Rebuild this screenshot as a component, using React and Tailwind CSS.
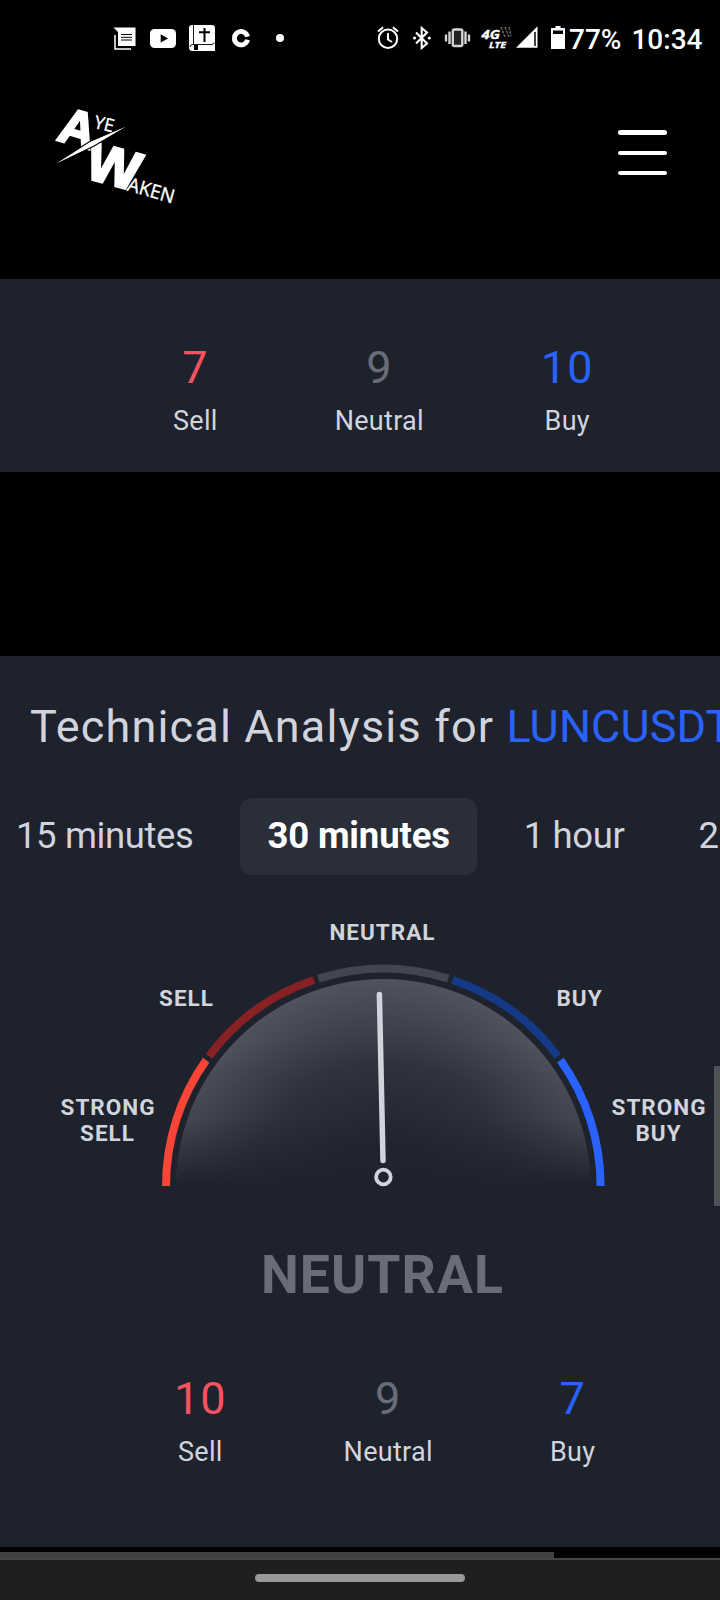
import { useState } from "react";

const tabs = ["15 minutes", "30 minutes", "1 hour", "2 hours"];

function StatusBar() {
  return (
    <div className="h-[76px] flex items-center text-white shrink-0">
      <svg width="550" height="76" viewBox="0 0 550 76" className="shrink-0">
        {/* news */}
        <path d="M113.500 27.500h22v18.500h-17.500v-14z" fill="white" />
        <path d="M115 35v14h16" fill="none" stroke="white" strokeWidth="1.500" />
        <path d="M121 34.500h11M121 37.300h11M121 40h11" stroke="black" strokeWidth="1" />
        {/* video */}
        <rect x="150" y="29" width="26" height="19" rx="4.500" fill="white" />
        <path d="M160.700 34.200v8.400l7.300-4.200z" fill="black" />
        {/* bible */}
        <path d="M192 25h20q3 0 3 3v23h-22.500q-3.500 0-3.500-3.500v-19.500q0-3 3-3z" fill="white" />
        <path d="M193.500 25v19M190 47q0-2.500 3-2.500h19q2 0 2-2" fill="none" stroke="black" strokeWidth="0.900" />
        <path d="M204.500 28v14M199 32.200h11" stroke="black" strokeWidth="2" />
        <path d="M194 45h4v5h-4z" fill="black" />
        {/* coin */}
        <path d="M247.600 36.600a6.700 6.700 0 1 0 0 3.200" fill="none" stroke="white" strokeWidth="4.800" />
        <circle cx="280" cy="38" r="4" fill="white" />
        {/* alarm */}
        <g fill="none" stroke="white" strokeWidth="2">
          <circle cx="388" cy="38.800" r="9.200" />
          <path d="M388 33v6.500l4 2.500M378 31.500l5-4.300M398 31.500l-5-4.300" />
        </g>
        {/* bluetooth */}
        <path d="M416 32.500l11 11-5.300 4.500V28l5.300 4.500-11 11" fill="none" stroke="white" strokeWidth="2.100" />
        <circle cx="414.500" cy="38" r="1.600" fill="white" />
        <circle cx="429.300" cy="38" r="1.600" fill="white" />
        {/* vibrate */}
        <g fill="none" stroke="#d4d4d4" strokeWidth="2.400">
          <rect x="452.800" y="29.500" width="9.500" height="16.500" rx="1.500" fill="#222" />
          <path d="M449.500 31.500v12.500M446 34.500v7M465.500 31.500v12.500M469 34.500v7" />
        </g>
        {/* network */}
        <g fill="white" stroke="white" strokeWidth="0.300" fontWeight="700" fontStyle="italic" fontFamily="'Open Sans', sans-serif">
          <text x="481.500" y="39.300" fontSize="12.500" textLength="18.500" lengthAdjust="spacingAndGlyphs">4G</text>
          <text x="489" y="48" fontSize="9" textLength="17" lengthAdjust="spacingAndGlyphs">LTE</text>
        </g>
        <path d="M501 27l4 10M505 27l4 10M509 27l2 9" stroke="#666" strokeWidth="1.500" strokeDasharray="3 1" />
        {/* signal */}
        <path d="M516 47.800l21.500-21.500v21.500z" fill="white" />
        <path d="M535 32v14" stroke="black" strokeWidth="1.500" />
      </svg>
      <svg width="17" height="76" viewBox="550 0 17 76" className="shrink-0">
        <path d="M555.500 26h5v2h4.500v21h-14v-21h4.500z" fill="white" />
        <path d="M553 30.500h10v3.500h-10z" fill="black" />
      </svg>
      <span className="mt-[3px] ml-[2px] text-[28px] font-medium leading-none">77%</span>
      <span className="mt-[3px] ml-[10px] text-[28px] font-medium leading-none">10:34</span>
    </div>
  );
}

function Logo() {
  return (
    <svg width="150" height="120" viewBox="0 0 450 360" fill="white">
      <g fontFamily="'Liberation Sans', Arial, sans-serif" fontWeight="700" stroke="white" strokeWidth="7">
        <text transform="translate(47 134) rotate(16)" fontSize="150">A</text>
        <text transform="translate(128 247) rotate(15) scale(1.06 1)" fontSize="162">W</text>
      </g>
      {/* slash with a dark edge that cuts into both letters */}
      <path d="M48 206L150 141L257 95L160 152z" stroke="black" strokeWidth="7" />
      <path d="M48 206L150 141L257 95L160 152z" />
      <g fontFamily="'Open Sans', sans-serif" stroke="white" strokeWidth="1">
        <text transform="translate(159 98) rotate(14)" fontSize="54" textLength="60" lengthAdjust="spacingAndGlyphs">YE</text>
        <text transform="translate(259 286) rotate(16)" fontSize="58" textLength="144" lengthAdjust="spacingAndGlyphs">AKEN</text>
      </g>
    </svg>
  );
}

function Header() {
  return (
    <header className="h-[203px] flex items-start justify-between pl-10 pr-[53px] shrink-0">
      <div className="mt-[19px]">
        <Logo />
      </div>
      <button className="mt-[54px] w-[49px] flex flex-col">
        <span className="h-[5px] rounded-sm bg-white" />
        <span className="mt-[16px] h-[4px] rounded-sm bg-white" />
        <span className="mt-[16px] h-[4px] rounded-sm bg-white" />
      </button>
    </header>
  );
}

function Counter({ value, label, color }) {
  return (
    <div className="flex flex-col items-center">
      <span className={`text-[45px] leading-[54px] tracking-[1px] ${color}`}>{value}</span>
      <span className="text-[27px] leading-[36px] mt-[8px] tracking-[0.300px]">{label}</span>
    </div>
  );
}

function Counters({ sell, neutral, buy }) {
  return (
    <div className="flex gap-[117px]">
      <Counter value={sell} label="Sell" color="text-[#f7525f]" />
      <Counter value={neutral} label="Neutral" color="text-[#6a6d78]" />
      <Counter value={buy} label="Buy" color="text-[#2962ff]" />
    </div>
  );
}

// arcs are 36deg each, from left to right
const segments = [
  { from: 180, to: 144.600, color: "#f94438" },
  { from: 143.400, to: 108.600, color: "#872124" },
  { from: 107.400, to: 72.600, color: "#434651" },
  { from: 71.400, to: 36.600, color: "#143a87" },
  { from: 35.400, to: 0, color: "#2962ff" },
];

function point(angle) {
  const a = (angle * Math.PI) / 180;
  return `${383.3 + 217.3 * Math.cos(a)} ${286 - 217.3 * Math.sin(a)}`;
}

function Gauge() {
  return (
    <svg width="720" height="310" viewBox="0 0 720 310" className="block">
      <defs>
        <radialGradient id="dial" gradientUnits="userSpaceOnUse" cx="383.300" cy="286" r="207">
          <stop offset="0.200" stopColor="#232733" />
          <stop offset="0.600" stopColor="#32353f" />
          <stop offset="1" stopColor="#50535e" />
        </radialGradient>
        <linearGradient id="fade" x1="0" y1="0" x2="0" y2="1">
          <stop offset="0.300" stopColor="#1e222d" stopOpacity="0" />
          <stop offset="0.680" stopColor="#1e222d" stopOpacity="0.250" />
          <stop offset="1" stopColor="#1e222d" />
        </linearGradient>
      </defs>
      <path d="M176.300 286a207 207 0 0 1 414 0z" fill="url(#dial)" />
      <path d="M176 286a207.300 207.300 0 0 1 414.600 0z" fill="url(#fade)" />
      {segments.map((s) => (
        <path
          key={s.color}
          d={`M${point(s.from)}A217.3 217.3 0 0 1 ${point(s.to)}`}
          fill="none"
          stroke={s.color}
          strokeWidth="8"
        />
      ))}
      <path d="M379.400 94.500L383 260.500" stroke="#d1d4dc" strokeWidth="5.500" strokeLinecap="round" />
      <circle cx="383.400" cy="277" r="7.300" fill="none" stroke="#d1d4dc" strokeWidth="3.800" />
      <g fill="#d1d4dc" fontSize="22.500" fontWeight="700" textAnchor="middle" letterSpacing="1">
        <text x="382.500" y="40">NEUTRAL</text>
        <text x="186.500" y="106">SELL</text>
        <text x="579.500" y="106">BUY</text>
        <text x="108" y="215">STRONG</text>
        <text x="107.500" y="241">SELL</text>
        <text x="659" y="215">STRONG</text>
        <text x="658.500" y="241">BUY</text>
      </g>
    </svg>
  );
}

function App() {
  const [active, setActive] = useState("30 minutes");

  return (
    <div className="relative w-[720px] h-[1600px] overflow-hidden bg-black text-[#d1d4dc] flex flex-col font-[Roboto,sans-serif]">
      <StatusBar />
      <Header />

      <section className="h-[193px] shrink-0 bg-[#1e222d] pt-[62px] pl-[173px]">
        <Counters sell={7} neutral={9} buy={10} />
      </section>

      <section className="mt-[184px] h-[891px] shrink-0 bg-[#1e222d] overflow-hidden flex flex-col">
        <h1 className="mt-[44px] ml-[30px] text-[45px] leading-[54px] whitespace-nowrap tracking-[1.150px]">
          Technical Analysis for{" "}
          <span className="text-[#2962ff] tracking-[0.100px]">LUNCUSDT</span>
        </h1>

        <div className="mt-[44px] -ml-[11px] flex gap-5 shrink-0">
          {tabs.map((tab) => (
            <button
              key={tab}
              onClick={() => setActive(tab)}
              className={`h-[77px] px-[27px] rounded-xl text-[36.500px] whitespace-nowrap shrink-0 ${
                active === tab
                  ? "bg-[#2a2e39] text-white font-bold tracking-[-0.150px]"
                  : "tracking-[-0.400px]"
              }`}
            >
              {tab}
            </button>
          ))}
        </div>

        <div className="mt-[25px] shrink-0">
          <Gauge />
        </div>

        <p className="mt-[33px] ml-[45px] text-center text-[53.500px] leading-[64px] font-bold tracking-[1.100px] text-[#6a6d78]">
          NEUTRAL
        </p>

        <div className="mt-[65px] pl-[174px]">
          <Counters sell={10} neutral={9} buy={7} />
        </div>
      </section>

      {/* horizontal page scrollbar */}
      <div className="mt-[5px] h-[6px] w-[554px] shrink-0 bg-[#404040]" />
      <div className="h-[42px] shrink-0 bg-[#1f1f1f] border-t-2 border-[#454545] flex justify-center pt-[14px]">
        <div className="w-[210px] h-[8px] rounded-full bg-[#999999]" />
      </div>

      {/* vertical scrollbar thumb */}
      <div className="absolute right-0 top-[1066px] w-[6px] h-[140px] bg-[#4f5254]" />
    </div>
  );
}

export default App;
